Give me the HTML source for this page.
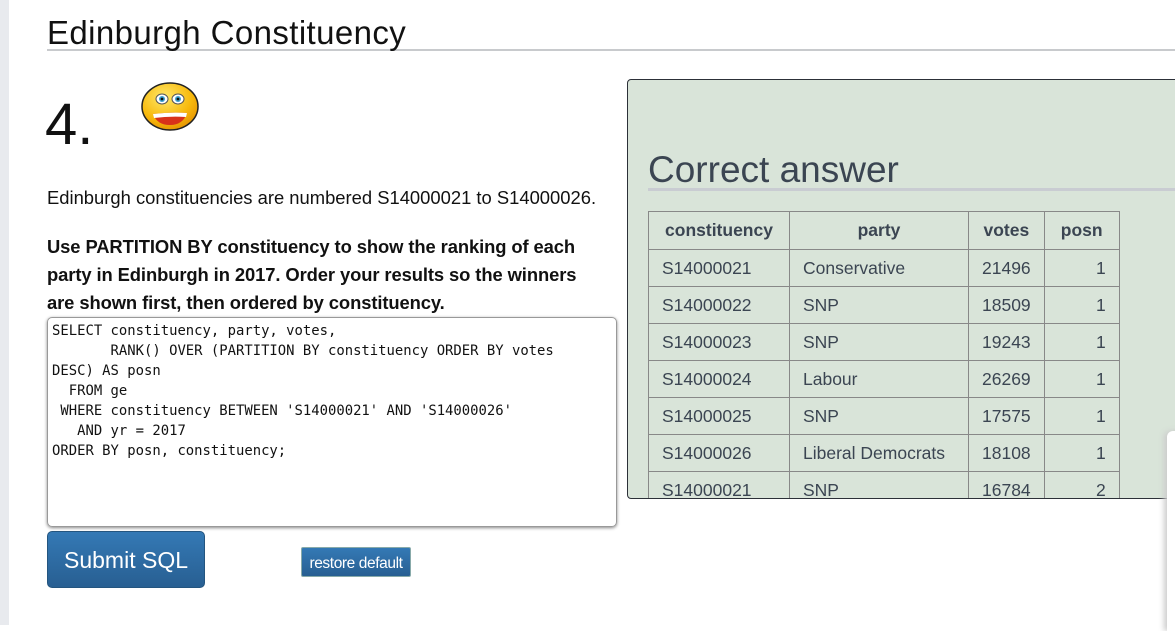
<!DOCTYPE html>
<html><head><style>
*{margin:0;padding:0;box-sizing:border-box}
body{width:1175px;height:625px;overflow:hidden;background:#fff;font-family:"Liberation Sans",sans-serif;color:#111;position:relative}
.strip{position:absolute;left:0;top:0;width:9px;height:625px;background:#e8eaee}
h1{position:absolute;left:47px;top:12px;font-weight:normal;font-size:33px;width:1128px;border-bottom:2px solid #c8cacd;height:39px;line-height:42px;letter-spacing:0.4px}
.num{position:absolute;left:45px;top:93px;font-size:58px;line-height:64px}
.p1{position:absolute;left:47px;top:187px;font-size:18.4px}
.p2{position:absolute;left:47px;top:233px;font-size:18.4px;font-weight:bold;line-height:28px;width:600px;letter-spacing:-0.1px}
.ta{position:absolute;left:47px;top:317px;width:570px;height:210px;border:1px solid #999;border-radius:5px;box-shadow:0 1px 3px #888;font-family:"DejaVu Sans Mono","Liberation Mono",monospace;font-size:13.9px;line-height:20px;padding:3px 4px;white-space:pre;overflow:hidden}
.sub{position:absolute;left:47px;top:531px;width:158px;height:57px;border-radius:5px;background:linear-gradient(#3479b5,#285f92);border:1px solid #24557f;color:#fff;font-size:23px;text-align:center;line-height:57px}
.rst{position:absolute;left:301px;top:547px;width:110px;height:30px;background:linear-gradient(#3479b5,#285f92);border:1px solid #8aa;border-radius:2px;color:#fff;font-size:15.5px;text-align:center;line-height:31px;letter-spacing:-0.4px}
.panel{position:absolute;left:627px;top:79px;width:560px;height:420px;background:#d9e4d9;border:1px solid #2c3038;border-radius:4px;overflow:hidden}
.panel h2{position:absolute;left:20px;top:68px;font-weight:normal;font-size:37px;color:#3b4552;width:560px;border-bottom:3px solid #c9ccd2;height:43px;line-height:44px}
table{position:absolute;left:20px;top:131px;border-collapse:collapse;font-size:17.5px;color:#3b4552}
td,th{border:1px solid #888;height:37px;padding:0 13px}
th{height:38px}
td.r{text-align:right}
.pop{position:absolute;left:1167px;top:431px;width:20px;height:200px;background:#fff;border-radius:6px 0 0 0;box-shadow:-3px 0 6px #ccc}
</style></head><body>
<div class="strip"></div>
<h1>Edinburgh Constituency</h1>
<div class="num">4.</div>
<svg style="position:absolute;left:141px;top:82px" width="60" height="50" viewBox="0 0 60 50">
<defs><radialGradient id="g" cx="0.4" cy="0.3" r="0.8"><stop offset="0" stop-color="#ffe86a"/><stop offset="0.6" stop-color="#f7b90c"/><stop offset="1" stop-color="#e08a00"/></radialGradient></defs>
<ellipse cx="29" cy="24.5" rx="28" ry="23.5" fill="url(#g)" stroke="#222" stroke-width="1.5"/>
<ellipse cx="21" cy="17" rx="6" ry="5" fill="#fff" stroke="#555"/><circle cx="21" cy="17" r="3" fill="#3aa0d0"/><circle cx="21" cy="17" r="1.4" fill="#111"/>
<ellipse cx="37" cy="17" rx="6" ry="5" fill="#fff" stroke="#555"/><circle cx="37" cy="17" r="3" fill="#3aa0d0"/><circle cx="37" cy="17" r="1.4" fill="#111"/>
<path d="M12 32 Q29 30 46 31 Q42 43 29 43 Q16 43 12 32Z" fill="#d8321a"/>
<path d="M12 32 Q29 30 46 31 L45 35 Q29 34 13 36Z" fill="#fff"/>
</svg>
<div class="p1">Edinburgh constituencies are numbered S14000021 to S14000026.</div>
<div class="p2">Use PARTITION BY constituency to show the ranking of each<br>party in Edinburgh in 2017. Order your results so the winners<br>are shown first, then ordered by constituency.</div>
<div class="ta">SELECT constituency, party, votes,
       RANK() OVER (PARTITION BY constituency ORDER BY votes
DESC) AS posn
  FROM ge
 WHERE constituency BETWEEN 'S14000021' AND 'S14000026'
   AND yr = 2017
ORDER BY posn, constituency;</div>
<div class="sub">Submit SQL</div>
<div class="rst">restore default</div>
<div class="panel">
<h2>Correct answer</h2>
<table>
<tr><th style="width:141px">constituency</th><th style="width:179px">party</th><th style="width:73px">votes</th><th style="width:75px">posn</th></tr>
<tr><td>S14000021</td><td>Conservative</td><td class="r">21496</td><td class="r">1</td></tr>
<tr><td>S14000022</td><td>SNP</td><td class="r">18509</td><td class="r">1</td></tr>
<tr><td>S14000023</td><td>SNP</td><td class="r">19243</td><td class="r">1</td></tr>
<tr><td>S14000024</td><td>Labour</td><td class="r">26269</td><td class="r">1</td></tr>
<tr><td>S14000025</td><td>SNP</td><td class="r">17575</td><td class="r">1</td></tr>
<tr><td>S14000026</td><td>Liberal Democrats</td><td class="r">18108</td><td class="r">1</td></tr>
<tr><td>S14000021</td><td>SNP</td><td class="r">16784</td><td class="r">2</td></tr>
</table>
</div>
<div class="pop"></div>
</body></html>
